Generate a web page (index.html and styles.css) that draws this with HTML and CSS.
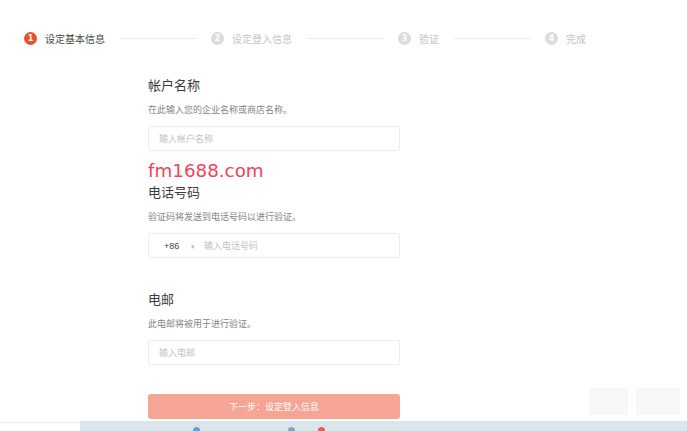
FILE: index.html
```html
<!DOCTYPE html>
<html lang="zh-CN">
<head>
  <meta charset="UTF-8">
  <title>设定基本信息</title>
  <link rel="stylesheet" href="styles.css">
</head>
<body>
  <div class="steps">
    <div class="step active"><span class="num">1</span><span class="label">设定基本信息</span></div>
    <div class="line"></div>
    <div class="step"><span class="num">2</span><span class="label">设定登入信息</span></div>
    <div class="line"></div>
    <div class="step"><span class="num">3</span><span class="label">验证</span></div>
    <div class="line"></div>
    <div class="step"><span class="num">4</span><span class="label">完成</span></div>
  </div>

  <div class="form">
    <div class="field">
      <h2>帐户名称</h2>
      <p class="hint">在此输入您的企业名称或商店名称。</p>
      <div class="input"><span class="ph">输入帐户名称</span></div>
    </div>

    <div class="field">
      <div class="mark">fm1688.com</div>
      <h2>电话号码</h2>
      <p class="hint">验证码将发送到电话号码以进行验证。</p>
      <div class="input phone">
        <span class="code">+86</span>
        <span class="caret">▾</span>
        <span class="ph">输入电话号码</span>
      </div>
    </div>

    <div class="field">
      <h2>电邮</h2>
      <p class="hint">此电邮将被用于进行验证。</p>
      <div class="input"><span class="ph">输入电邮</span></div>
    </div>

    <button class="next">下一步：设定登入信息</button>
  </div>

  <div class="blur"><span></span><span></span></div>

  <div class="footer">
    <div class="foot-left"></div>
    <div class="foot-bar">
      <span class="dot blue"></span>
      <span class="dot grey"></span>
      <span class="dot red"></span>
    </div>
  </div>
</body>
</html>
```

FILE: styles.css
```css
body {
  margin: 0;
  background: #fff;
  font-family: "Noto Sans CJK SC", "Noto Sans", sans-serif;
  color: #333;
  height: 431px;
  overflow: hidden;
  position: relative;
}
.steps {
  display: flex;
  align-items: center;
  padding: 31px 0 0 24px;
  height: 14px;
}
.step {
  display: flex;
  align-items: center;
  gap: 8px;
}
.num {
  width: 13px;
  height: 13px;
  border-radius: 50%;
  background: #dcdcdc;
  color: #fff;
  font-size: 8px;
  line-height: 13px;
  text-align: center;
  font-family: "DejaVu Sans", sans-serif;
  font-weight: bold;
}
.label {
  font-size: 10px;
  line-height: 13px;
  color: #c4c4c4;
}
.step.active .num {
  background: #e8502c;
}
.step.active .label {
  color: #444;
}
.line {
  width: 77px;
  height: 1px;
  background: #ececec;
  margin: 0 14px 0 15px;
}
.form {
  width: 252px;
  margin: 31px 0 0 148px;
}
.field {
  position: relative;
  margin-bottom: 32px;
}
.field:nth-child(3) {
  margin-bottom: 29px;
}
h2 {
  margin: 0;
  font-size: 13px;
  line-height: 18px;
  font-weight: normal;
  color: #3a3a3a;
}
.hint {
  margin: 10px 0 0;
  font-size: 9px;
  line-height: 12px;
  color: #858585;
}
.input {
  margin-top: 10px;
  height: 25px;
  box-sizing: border-box;
  border: 1px solid #ededed;
  border-radius: 2px;
  display: flex;
  align-items: center;
  padding-left: 10px;
  font-size: 9px;
}
.ph {
  color: #c2c2c2;
}
.phone {
  padding-left: 15px;
}
.code {
  color: #444;
  font-family: "Liberation Sans", sans-serif;
  width: 27px;
}
.caret {
  color: #bbb;
  font-size: 7px;
  width: 13px;
}
.mark {
  position: absolute;
  left: 0;
  top: -23px;
  font-family: "DejaVu Sans", sans-serif;
  font-size: 18.3px;
  line-height: 22px;
  color: #f0435b;
}
.next {
  display: block;
  width: 252px;
  height: 25px;
  border: none;
  border-radius: 3px;
  background: #f6a494;
  color: #fff;
  font-family: "Noto Sans CJK SC", sans-serif;
  font-size: 9px;
  padding: 0;
}
.blur {
  position: absolute;
  left: 590px;
  top: 388px;
  display: flex;
  gap: 8px;
}
.blur span {
  width: 38px;
  height: 27px;
  background: #f7f7f7;
}
.blur span + span {
  width: 44px;
}
.footer {
  display: flex;
  margin-top: 2px;
  height: 12px;
}
.foot-left {
  width: 80px;
  border-top: 1px solid #eee;
  margin-top: 1px;
}
.foot-bar {
  flex: 1;
  background: #dbe5ec;
  position: relative;
}
.dot {
  position: absolute;
  top: 6px;
  width: 7px;
  height: 7px;
  border-radius: 50%;
}
.dot.blue { left: 113px; background: #6b9ed8; }
.dot.grey { left: 208px; background: #8aa3b8; }
.dot.red { left: 238px; background: #e06060; }
```
